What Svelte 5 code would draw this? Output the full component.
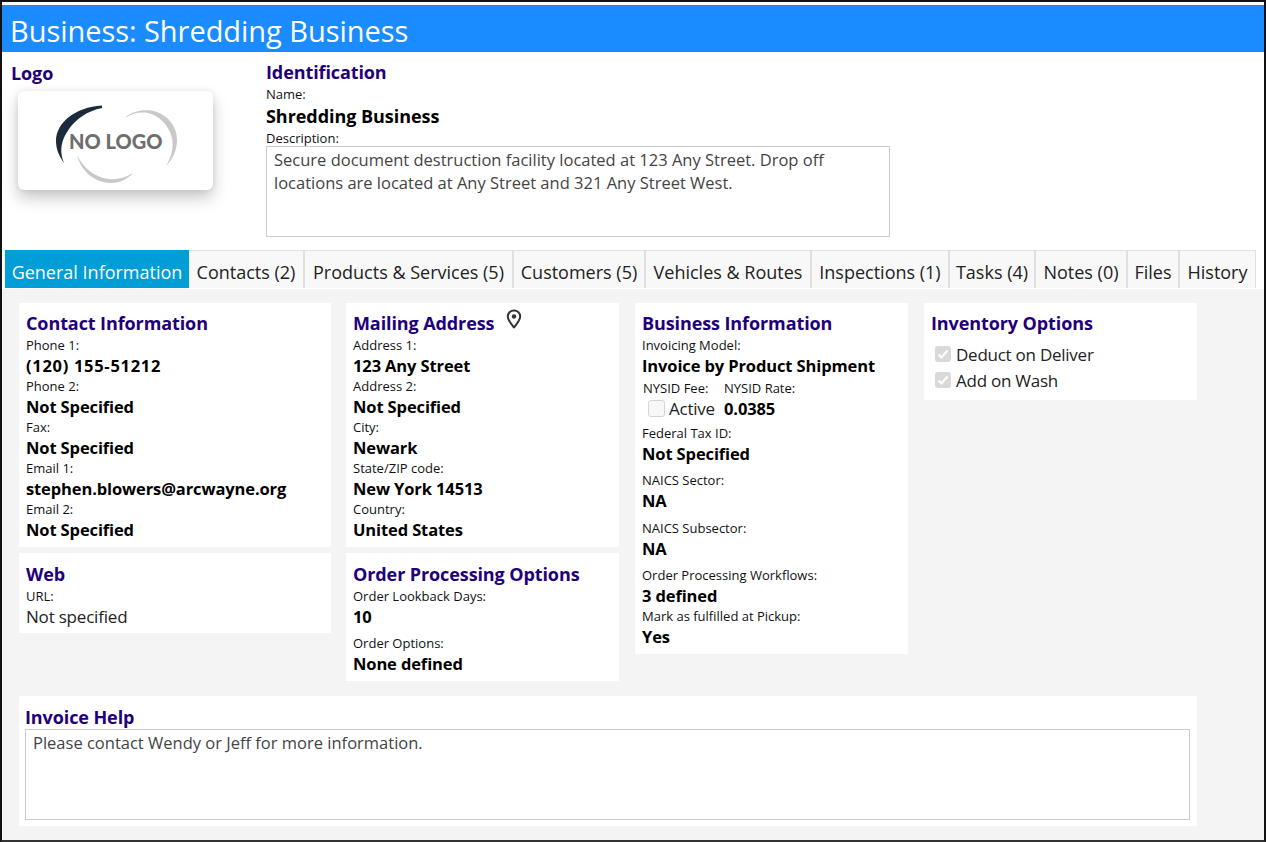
<script>
	const tabs = [
		'General Information',
		'Contacts (2)',
		'Products & Services (5)',
		'Customers (5)',
		'Vehicles & Routes',
		'Inspections (1)',
		'Tasks (4)',
		'Notes (0)',
		'Files',
		'History'
	];
	const contact = [
		['Phone 1:', '(120) 155-51212', true],
		['Phone 2:', 'Not Specified'],
		['Fax:', 'Not Specified'],
		['Email 1:', 'stephen.blowers@arcwayne.org'],
		['Email 2:', 'Not Specified']
	];
	const mailing = [
		['Address 1:', '123 Any Street'],
		['Address 2:', 'Not Specified'],
		['City:', 'Newark'],
		['State/ZIP code:', 'New York 14513'],
		['Country:', 'United States']
	];
</script>

<div class="page">
	<h1 class="title">Business: Shredding Business</h1>

	<section class="top">
		<div class="logo-col">
			<h2 class="head">Logo</h2>
			<div class="logo-card">
				<svg width="195" height="99" viewBox="0 0 195 99" aria-hidden="true">
					<path d="M84 14.500C57 16 38 32 38 50C38 58 41 65 46 72C41 60 43 49 51 38C58 28 69 20 84 17Z" fill="#1c2b3c" />
					<path d="M107 27C113 20 125 18.500 133 19.500C149 22 159 35 159 49C159 59 155 68 148 75C153 66 156 58 154 47C151 34 140 23 127 21.500C119 21 113 23 107 27Z" fill="#c9c9c9" />
					<path d="M59 64C63 81 78 92 93 92C102 92 110 88 115 82C108 86 100 89 91 88C75 86 65 76 59 64Z" fill="#c9c9c9" />
				</svg>
				<span class="logo-text">NO LOGO</span>
			</div>
		</div>
		<div class="ident">
			<h2 class="head">Identification</h2>
			<div class="label">Name:</div>
			<div class="value">Shredding Business</div>
			<div class="label">Description:</div>
			<div class="area desc">Secure document destruction facility located at 123 Any Street. Drop off locations are located at Any Street and 321 Any Street West.</div>
		</div>
	</section>

	<nav class="tabs">
		{#each tabs as tab, i}
			<div class="tab" class:active={i === 0}>{tab}</div>
		{/each}
	</nav>

	<main class="content">
		<div class="columns">
			<div class="col col-a">
				<section class="card contact">
					<h2 class="head">Contact Information</h2>
					{#each contact as [l, v, wide]}
						<div class="label">{l}</div>
						<div class="value" class:wide>{v}</div>
					{/each}
				</section>
				<section class="card web">
					<h2 class="head">Web</h2>
					<div class="label">URL:</div>
					<div class="plain">Not specified</div>
				</section>
			</div>

			<div class="col">
				<section class="card contact">
					<h2 class="head with-pin">
						Mailing Address
						<svg class="pin" width="16" height="20" viewBox="0 0 16 20" aria-hidden="true">
							<path d="M8 1.500C4.400 1.500 1.800 4.200 1.800 7.500C1.800 11.500 6 15.500 8 18.500C10 15.500 14.200 11.500 14.200 7.500C14.200 4.200 11.600 1.500 8 1.500Z" fill="none" stroke="#333" stroke-width="2" stroke-linejoin="round" />
							<circle cx="8" cy="7.500" r="2.200" fill="#333" />
						</svg>
					</h2>
					{#each mailing as [l, v]}
						<div class="label">{l}</div>
						<div class="value">{v}</div>
					{/each}
				</section>
				<section class="card order">
					<h2 class="head">Order Processing Options</h2>
					<div class="label">Order Lookback Days:</div>
					<div class="value">10</div>
					<div class="label spaced">Order Options:</div>
					<div class="value">None defined</div>
				</section>
			</div>

			<div class="col">
				<section class="card contact business">
					<h2 class="head">Business Information</h2>
					<div class="label">Invoicing Model:</div>
					<div class="value">Invoice by Product Shipment</div>
					<div class="nysid">
						<div class="nysid-fee">
							<div class="label">NYSID Fee:</div>
							<label class="check active-check">
								<span class="box"></span>
								<span>Active</span>
							</label>
						</div>
						<div>
							<div class="label">NYSID Rate:</div>
							<div class="value">0.0385</div>
						</div>
					</div>
					<div class="label">Federal Tax ID:</div>
					<div class="value">Not Specified</div>
					<div class="label spaced">NAICS Sector:</div>
					<div class="value">NA</div>
					<div class="label spaced-more">NAICS Subsector:</div>
					<div class="value">NA</div>
					<div class="label spaced">Order Processing Workflows:</div>
					<div class="value">3 defined</div>
					<div class="label">Mark as fulfilled at Pickup:</div>
					<div class="value">Yes</div>
				</section>
			</div>

			<div class="col">
				<section class="card contact inventory">
					<h2 class="head">Inventory Options</h2>
					<label class="check">
						<span class="box on">
							<svg width="16" height="16" viewBox="0 0 16 16" aria-hidden="true"><path d="M3.500 8.500L6.500 11.500L12.500 4.500" fill="none" stroke="#fff" stroke-width="2.200" /></svg>
						</span>
						<span>Deduct on Deliver</span>
					</label>
					<label class="check">
						<span class="box on">
							<svg width="16" height="16" viewBox="0 0 16 16" aria-hidden="true"><path d="M3.500 8.500L6.500 11.500L12.500 4.500" fill="none" stroke="#fff" stroke-width="2.200" /></svg>
						</span>
						<span>Add on Wash</span>
					</label>
				</section>
			</div>
		</div>

		<section class="card help">
			<h2 class="head">Invoice Help</h2>
			<div class="area help-area">Please contact Wendy or Jeff for more information.</div>
		</section>
	</main>
</div>

<style>
	:global(body) {
		margin: 0;
		background: #fff;
	}

	.page {
		box-sizing: border-box;
		height: 842px;
		display: flex;
		flex-direction: column;
		border: 2px solid #111;
		border-bottom-color: #333;
		padding-top: 3px;
		font-family: 'Open Sans', 'Noto Sans', sans-serif;
		overflow: hidden;
	}

	.title {
		margin: 0;
		height: 47px;
		padding-left: 8px;
		background: #1a8cff;
		color: #fff;
		font-size: 29px;
		font-weight: 400;
		line-height: 52px;
		letter-spacing: -0.05px;
		white-space: nowrap;
	}

	.top {
		display: flex;
		height: 198px;
		flex: none;
	}

	.logo-col {
		width: 264px;
		padding: 9px 0 0 9px;
		box-sizing: border-box;
	}

	.logo-card {
		position: relative;
		width: 195px;
		height: 99px;
		margin: 6px 0 0 7px;
		border-radius: 6px;
		background: #fff;
		box-shadow: 0 8px 16px rgba(0, 0, 0, 0.22), 0 0 6px rgba(0, 0, 0, 0.08);
	}

	.logo-card svg {
		display: block;
	}

	.logo-text {
		position: absolute;
		left: 51px;
		top: 36px;
		font-family: Lato, 'Open Sans', sans-serif;
		font-size: 20px;
		line-height: 28px;
		font-weight: 900;
		color: #6e6e6e;
		white-space: nowrap;
	}

	.ident {
		width: 624px;
		padding-top: 8px;
	}

	.head {
		margin: 0;
		font-size: 18px;
		line-height: 24px;
		font-weight: 700;
		color: #1f007a;
		letter-spacing: -0.1px;
		white-space: nowrap;
	}

	.label {
		font-size: 13px;
		line-height: 20px;
		color: #111;
		white-space: nowrap;
	}

	.value {
		font-size: 16.500px;
		line-height: 21px;
		font-weight: 700;
		color: #000;
		letter-spacing: -0.12px;
		white-space: nowrap;
	}

	.value.wide {
		letter-spacing: 0.7px;
	}

	.ident .value {
		line-height: 24px;
		font-size: 18px;
		letter-spacing: -0.05px;
	}

	.area {
		box-sizing: border-box;
		border: 1px solid #ccc;
		background: #fff;
		color: #444;
		font-size: 16.500px;
		line-height: 23px;
	}

	.desc {
		height: 91px;
		padding: 1px 7px;
		margin-top: -2px;
		position: relative;
	}

	.tabs {
		display: grid;
		grid-template-columns: 184px 116px 209px 132px 166px 138px 86px 92px 52px 76px;
		flex: none;
		height: 38px;
		padding-left: 3px;
	}

	.tab {
		box-sizing: border-box;
		height: 38px;
		background: #f8f8f8;
		border-top: 1px solid #e0e0e0;
		border-right: 2px solid #e0e0e0;
		color: #222;
		font-size: 18px;
		line-height: 43px;
		text-align: center;
		white-space: nowrap;
	}

	.tab:last-child {
		border-right-width: 1px;
	}

	.tab.active {
		background: #009dd6;
		color: #fff;
		border-top-color: #009dd6;
		border-right: 0;
	}

	.content {
		flex: 1;
		margin-top: 1px;
		padding: 14px 67px 0 17px;
		background: #f4f4f4;
	}

	.columns {
		display: grid;
		grid-template-columns: 311px 273px 273px 273px;
		column-gap: 16px;
		height: 393px;
	}

	.columns .col-a {
		margin-right: -1px;
	}

	.col {
		display: flex;
		flex-direction: column;
		gap: 6px;
		align-items: stretch;
	}

	.card {
		box-sizing: border-box;
		background: #fff;
		padding: 9px 7px 8px;
	}

	.contact {
		height: 244px;
		padding-top: 8px;
	}

	.web {
		height: 80px;
	}

	.plain {
		font-size: 17px;
		line-height: 22px;
		color: #222;
		letter-spacing: -0.2px;
	}

	.with-pin {
		display: flex;
		align-items: flex-start;
		gap: 12px;
	}

	.pin {
		margin-top: -2px;
	}

	.order {
		height: 128px;
	}

	.spaced {
		margin-top: 6px;
	}

	.spaced-more {
		margin-top: 7px;
	}

	.business {
		height: 351px;
	}

	.nysid {
		display: flex;
		margin: 2px 0 0 1px;
		height: 45px;
	}

	.nysid-fee {
		width: 81px;
	}

	.check {
		display: flex;
		align-items: center;
		gap: 4px;
		height: 26px;
		margin-left: 4px;
		font-size: 17px;
		color: #222;
		letter-spacing: -0.25px;
		white-space: nowrap;
	}

	.active-check {
		height: 21px;
		margin-left: 5px;
	}

	.inventory {
		height: 97px;
	}

	.inventory .check {
		gap: 5px;
	}

	.inventory .check:first-of-type {
		margin-top: 6px;
	}

	.box {
		box-sizing: border-box;
		display: block;
		width: 17px;
		height: 17px;
		flex: none;
		border: 1px solid #d4d4d4;
		border-radius: 3px;
		background: #f8f8f8;
	}

	.box.on {
		width: 16px;
		height: 16px;
		border: 0;
		background: #d9d9d9;
	}

	.box svg {
		display: block;
	}

	.help {
		height: 130px;
		padding: 10px 7px 6px 6px;
	}

	.help .head {
		line-height: 23px;
	}

	.help-area {
		height: 91px;
		padding: 1px 7px;
	}
</style>
